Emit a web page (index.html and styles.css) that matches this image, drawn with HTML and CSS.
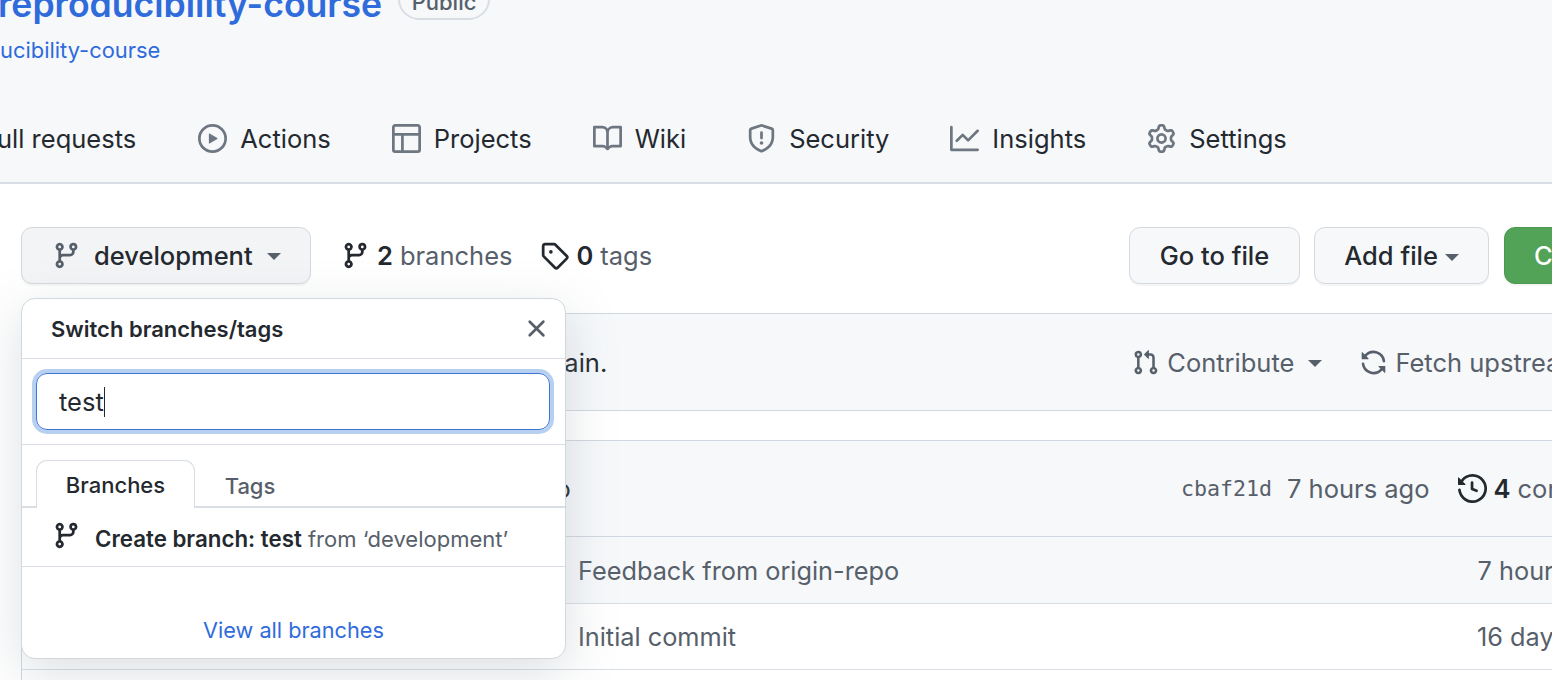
FILE: index.html

```html
<!DOCTYPE html>
<html lang="en">
<head>
  <meta charset="UTF-8">
  <title>reproducibility-course</title>
  <link rel="stylesheet" href="styles.css">
</head>
<body>
  <svg class="sprite" width="0" height="0">
    <symbol id="i-play" viewBox="0 0 16 16"><path d="M8 0a8 8 0 1 1 0 16A8 8 0 0 1 8 0ZM1.5 8a6.5 6.5 0 1 0 13 0 6.5 6.5 0 0 0-13 0Zm4.879-2.773 4.264 2.559a.25.25 0 0 1 0 .428l-4.264 2.559A.25.25 0 0 1 6 10.559V5.442a.25.25 0 0 1 .379-.215Z"/></symbol>
    <symbol id="i-table" viewBox="0 0 16 16"><path d="M0 1.75C0 .784.784 0 1.75 0h12.5C15.216 0 16 .784 16 1.75v12.5A1.75 1.75 0 0 1 14.25 16H1.75A1.75 1.75 0 0 1 0 14.25ZM6.5 6.5v8h7.75a.25.25 0 0 0 .25-.25V6.5Zm8-1.5V1.75a.25.25 0 0 0-.25-.25H1.75a.25.25 0 0 0-.25.25V5Zm-13 1.5v7.75c0 .138.112.25.25.25H5v-8Z"/></symbol>
    <symbol id="i-book" viewBox="0 0 16 16"><path d="M0 1.75A.75.75 0 0 1 .75 1h4.253c1.227 0 2.317.59 3 1.501A3.743 3.743 0 0 1 11.006 1h4.245a.75.75 0 0 1 .75.75v10.5a.75.75 0 0 1-.75.75h-4.507a2.25 2.25 0 0 0-1.591.659l-.622.621a.75.75 0 0 1-1.06 0l-.622-.621A2.25 2.25 0 0 0 5.258 13H.75a.75.75 0 0 1-.75-.75Zm7.251 10.324.004-5.073-.002-2.253A2.25 2.25 0 0 0 5.003 2.5H1.5v9h3.757a3.75 3.75 0 0 1 1.994.574ZM8.755 4.75l-.004 7.322a3.752 3.752 0 0 1 1.992-.572H14.5v-9h-3.495a2.25 2.25 0 0 0-2.25 2.25Z"/></symbol>
    <symbol id="i-shield" viewBox="0 0 16 16"><path d="M7.467.133a1.748 1.748 0 0 1 1.066 0l5.25 1.68A1.75 1.75 0 0 1 15 3.48V7c0 1.566-.32 3.182-1.303 4.682-.983 1.498-2.585 2.813-5.032 3.855a1.697 1.697 0 0 1-1.33 0c-2.447-1.042-4.049-2.357-5.032-3.855C1.32 10.182 1 8.566 1 7V3.48a1.75 1.75 0 0 1 1.217-1.667Zm.61 1.429a.25.25 0 0 0-.153 0l-5.25 1.68a.25.25 0 0 0-.174.238V7c0 1.358.275 2.666 1.057 3.86.784 1.194 2.121 2.34 4.366 3.297a.196.196 0 0 0 .154 0c2.245-.956 3.582-2.104 4.366-3.298C13.225 9.666 13.5 8.36 13.5 7V3.48a.251.251 0 0 0-.174-.237l-5.25-1.68ZM8.75 4.75v3a.75.75 0 0 1-1.5 0v-3a.75.75 0 0 1 1.5 0ZM9 10.5a1 1 0 1 1-2 0 1 1 0 0 1 2 0Z"/></symbol>
    <symbol id="i-graph" viewBox="0 0 16 16"><path d="M1.5 1.75V13.5h13.75a.75.75 0 0 1 0 1.5H.75a.75.75 0 0 1-.75-.75V1.75a.75.75 0 0 1 1.5 0Zm14.28 2.53-5.25 5.25a.75.75 0 0 1-1.06 0L7 7.06 4.28 9.78a.751.751 0 0 1-1.042-.018.751.751 0 0 1-.018-1.042l3.25-3.25a.75.75 0 0 1 1.06 0L10 7.94l4.72-4.72a.751.751 0 0 1 1.042.018.751.751 0 0 1 .018 1.042Z"/></symbol>
    <symbol id="i-gear" viewBox="0 0 16 16"><path d="M8 0a8.2 8.2 0 0 1 .701.031C9.444.095 9.99.645 10.16 1.29l.288 1.107c.018.066.079.158.212.224.231.114.454.243.668.386.123.082.233.09.299.071l1.103-.303c.644-.176 1.392.021 1.82.63.27.385.506.792.704 1.218.315.675.111 1.422-.364 1.891l-.814.806c-.049.048-.098.147-.088.294.016.257.016.515 0 .772-.01.147.038.246.088.294l.814.806c.475.469.679 1.216.364 1.891a7.977 7.977 0 0 1-.704 1.217c-.428.61-1.176.807-1.82.63l-1.102-.302c-.067-.019-.177-.011-.3.071a5.909 5.909 0 0 1-.668.386c-.133.066-.194.158-.211.224l-.29 1.106c-.168.646-.715 1.196-1.458 1.26a8.006 8.006 0 0 1-1.402 0c-.743-.064-1.289-.614-1.458-1.26l-.289-1.106c-.018-.066-.079-.158-.212-.224a5.738 5.738 0 0 1-.668-.386c-.123-.082-.233-.09-.299-.071l-1.103.303c-.644.176-1.392-.021-1.82-.63a8.12 8.12 0 0 1-.704-1.218c-.315-.675-.111-1.422.363-1.891l.815-.806c.05-.048.098-.147.088-.294a6.214 6.214 0 0 1 0-.772c.01-.147-.038-.246-.088-.294l-.815-.806C.635 6.045.431 5.298.746 4.623a7.92 7.92 0 0 1 .704-1.217c.428-.61 1.176-.807 1.82-.63l1.102.302c.067.019.177.011.3-.071.214-.143.437-.272.668-.386.133-.066.194-.158.211-.224l.29-1.106C6.009.645 6.556.095 7.299.03 7.53.01 7.764 0 8 0Zm-.571 1.525c-.036.003-.108.036-.137.146l-.289 1.105c-.147.561-.549.967-.998 1.189-.173.086-.34.183-.5.29-.417.278-.97.423-1.529.27l-1.103-.303c-.109-.03-.175.016-.195.045-.22.312-.412.644-.573.99-.014.031-.021.11.059.19l.815.806c.411.406.562.957.53 1.456a4.709 4.709 0 0 0 0 .582c.032.499-.119 1.05-.53 1.456l-.815.806c-.081.08-.073.159-.059.19.162.346.353.677.573.989.02.03.085.076.195.046l1.102-.303c.56-.153 1.113-.008 1.53.27.161.107.328.204.501.29.447.222.85.629.997 1.189l.289 1.105c.029.109.101.143.137.146a6.6 6.6 0 0 0 1.142 0c.036-.003.108-.036.137-.146l.289-1.105c.147-.561.549-.967.998-1.189.173-.086.34-.183.5-.29.417-.278.97-.423 1.529-.27l1.103.303c.109.029.175-.016.195-.045.22-.313.411-.644.573-.99.014-.031.021-.11-.059-.19l-.815-.806c-.411-.406-.562-.957-.53-1.456a4.709 4.709 0 0 0 0-.582c-.032-.499.119-1.05.53-1.456l.815-.806c.081-.08.073-.159.059-.19a6.464 6.464 0 0 0-.573-.989c-.02-.03-.085-.076-.195-.046l-1.102.303c-.56.153-1.113.008-1.53-.27a4.44 4.44 0 0 0-.501-.29c-.447-.222-.85-.629-.997-1.189l-.289-1.105c-.029-.11-.101-.143-.137-.146a6.6 6.6 0 0 0-1.142 0ZM11 8a3 3 0 1 1-6 0 3 3 0 0 1 6 0ZM9.5 8a1.5 1.5 0 1 0-3.001.001A1.5 1.5 0 0 0 9.5 8Z"/></symbol>
    <symbol id="i-branch" viewBox="0 0 16 16"><path d="M9.5 3.25a2.25 2.25 0 1 1 3 2.122V6A2.5 2.5 0 0 1 10 8.5H6a1 1 0 0 0-1 1v1.128a2.251 2.251 0 1 1-1.5 0V5.372a2.25 2.25 0 1 1 1.5 0v1.836A2.493 2.493 0 0 1 6 7h4a1 1 0 0 0 1-1v-.628A2.25 2.25 0 0 1 9.5 3.25Zm-6 0a.75.75 0 1 0 1.5 0 .75.75 0 0 0-1.5 0Zm8.25-.75a.75.75 0 1 0 0 1.5.75.75 0 0 0 0-1.5ZM4.25 12a.75.75 0 1 0 0 1.5.75.75 0 0 0 0-1.5Z"/></symbol>
    <symbol id="i-tag" viewBox="0 0 16 16"><path d="M1 7.775V2.75C1 1.784 1.784 1 2.75 1h5.025c.464 0 .91.184 1.238.513l6.25 6.25a1.75 1.75 0 0 1 0 2.474l-5.026 5.026a1.75 1.75 0 0 1-2.474 0l-6.25-6.25A1.752 1.752 0 0 1 1 7.775Zm1.5 0c0 .066.026.13.073.177l6.25 6.25a.25.25 0 0 0 .354 0l5.025-5.025a.25.25 0 0 0 0-.354l-6.25-6.25a.25.25 0 0 0-.177-.073H2.75a.25.25 0 0 0-.25.25ZM6 5a1 1 0 1 1 0 2 1 1 0 0 1 0-2Z"/></symbol>
    <symbol id="i-x" viewBox="0 0 16 16"><path d="M3.72 3.72a.75.75 0 0 1 1.06 0L8 6.94l3.22-3.22a.749.749 0 0 1 1.275.326.749.749 0 0 1-.215.734L9.06 8l3.22 3.22a.749.749 0 0 1-.326 1.275.749.749 0 0 1-.734-.215L8 9.06l-3.22 3.22a.751.751 0 0 1-1.042-.018.751.751 0 0 1-.018-1.042L6.94 8 3.72 4.78a.75.75 0 0 1 0-1.06Z"/></symbol>
    <symbol id="i-pr" viewBox="0 0 16 16"><path d="M1.5 3.25a2.25 2.25 0 1 1 3 2.122v5.256a2.251 2.251 0 1 1-1.5 0V5.372A2.25 2.25 0 0 1 1.5 3.25Zm5.677-.177L9.573.677A.25.25 0 0 1 10 .854V2.5h1A2.5 2.5 0 0 1 13.5 5v5.628a2.251 2.251 0 1 1-1.5 0V5a1 1 0 0 0-1-1h-1v1.646a.25.25 0 0 1-.427.177L7.177 3.427a.25.25 0 0 1 0-.354ZM3.75 2.5a.75.75 0 1 0 0 1.5.75.75 0 0 0 0-1.5Zm0 9.5a.75.75 0 1 0 0 1.5.75.75 0 0 0 0-1.5Zm8.25.75a.75.75 0 1 0 1.5 0 .75.75 0 0 0-1.5 0Z"/></symbol>
    <symbol id="i-sync" viewBox="0 0 16 16"><path d="M1.705 8.005a.75.75 0 0 1 .834.656 5.5 5.5 0 0 0 9.592 2.97l-1.204-1.204a.25.25 0 0 1 .177-.427h3.646a.25.25 0 0 1 .25.25v3.646a.25.25 0 0 1-.427.177l-1.38-1.38A7.002 7.002 0 0 1 1.05 8.84a.75.75 0 0 1 .656-.834ZM8 2.5a5.487 5.487 0 0 0-4.131 1.869l1.204 1.204A.25.25 0 0 1 4.896 6H1.25A.25.25 0 0 1 1 5.75V2.104a.25.25 0 0 1 .427-.177l1.38 1.38A7.002 7.002 0 0 1 14.95 7.16a.75.75 0 0 1-1.49.178A5.5 5.5 0 0 0 8 2.5Z"/></symbol>
    <symbol id="i-history" viewBox="0 0 16 16"><path d="m.427 1.927 1.215 1.215a8.002 8.002 0 1 1-1.6 5.685.75.75 0 1 1 1.493-.154 6.5 6.5 0 1 0 1.18-4.458l1.358 1.358A.25.25 0 0 1 3.896 6H.25A.25.25 0 0 1 0 5.75V2.104a.25.25 0 0 1 .427-.177ZM7.75 4a.75.75 0 0 1 .75.75v2.992l2.028.812a.75.75 0 0 1-.557 1.392l-2.5-1A.751.751 0 0 1 7 8.25v-3.5A.75.75 0 0 1 7.75 4Z"/></symbol>
  </svg>

  <header class="repo-head">
    <div class="title-row">
      <a class="repo-name">reproducibility-course</a>
      <span class="badge">Public</span>
    </div>
    <a class="fork-link">ucibility-course</a>
    <nav class="tabs">
      <a class="tab tab-cut">ull requests</a>
      <a class="tab"><svg class="icon nav-icon"><use href="#i-play"/></svg>Actions</a>
      <a class="tab"><svg class="icon nav-icon"><use href="#i-table"/></svg>Projects</a>
      <a class="tab"><svg class="icon nav-icon"><use href="#i-book"/></svg>Wiki</a>
      <a class="tab"><svg class="icon nav-icon"><use href="#i-shield"/></svg>Security</a>
      <a class="tab"><svg class="icon nav-icon"><use href="#i-graph"/></svg>Insights</a>
      <a class="tab"><svg class="icon nav-icon"><use href="#i-gear"/></svg>Settings</a>
    </nav>
  </header>

  <main class="content">
    <div class="toolbar">
      <button class="btn btn-branch">
        <svg class="icon branch-icon"><use href="#i-branch"/></svg>
        <span>development</span>
        <i class="caret"></i>
      </button>
      <a class="count count-branches"><svg class="icon dark-icon"><use href="#i-branch"/></svg><b>2</b> <span>branches</span></a>
      <a class="count count-tags"><svg class="icon dark-icon"><use href="#i-tag"/></svg><b>0</b> <span>tags</span></a>
      <div class="toolbar-right">
        <button class="btn btn-go">Go to file</button>
        <button class="btn btn-add">Add file <i class="caret"></i></button>
        <button class="btn btn-code">Code</button>
      </div>
    </div>

    <div class="notice">
      <span class="notice-text">main.</span>
      <div class="notice-actions">
        <a class="notice-action action-contribute"><svg class="icon muted-icon"><use href="#i-pr"/></svg>Contribute <i class="caret"></i></a>
        <a class="notice-action"><svg class="icon muted-icon"><use href="#i-sync"/></svg>Fetch upstream</a>
      </div>
    </div>

    <div class="files">
      <div class="commit-bar">
        <span class="commit-msg">Feedback from origin-repo</span>
        <span class="sha">cbaf21d</span>
        <span class="commit-time">7 hours ago</span>
        <a class="commits"><svg class="icon dark-icon"><use href="#i-history"/></svg><b>4</b> <span>commits</span></a>
      </div>
      <div class="file-row file-row-hover"><span class="file-msg">Feedback from origin-repo</span><span class="file-time">7 hours ago</span></div>
      <div class="file-row"><span class="file-msg">Initial commit</span><span class="file-time">16 days ago</span></div>
      <div class="file-row"></div>
    </div>
  </main>

  <div class="popup">
    <div class="popup-head">
      <strong>Switch branches/tags</strong>
      <svg class="icon close-icon"><use href="#i-x"/></svg>
    </div>
    <div class="popup-filter">
      <div class="filter-input">test<span class="cursor"></span></div>
    </div>
    <div class="popup-tabs">
      <span class="popup-tab popup-tab-on">Branches</span>
      <span class="popup-tab">Tags</span>
    </div>
    <div class="create-row">
      <svg class="icon create-icon"><use href="#i-branch"/></svg>
      <span><b>Create branch: test</b> <span class="from">from ‘development’</span></span>
    </div>
    <div class="popup-foot"><a>View all branches</a></div>
  </div>
</body>
</html>
```

FILE: styles.css

```css
html, body {
  height: 100%;
  overflow: hidden;
}

body {
  margin: 0;
  position: relative;
  font-family: Inter, "Noto Sans", sans-serif;
  font-size: 25.5px;
  color: #24292f;
  background: #fff;
}

.sprite {
  position: absolute;
}

.icon {
  fill: currentColor;
  flex: none;
}

.caret {
  display: inline-block;
  width: 0;
  height: 0;
  border-style: solid;
  border-width: 7px 7px 0;
  border-color: currentColor transparent transparent;
}

/* repo header */
.repo-head {
  height: 182px;
  background: #f6f8fa;
  border-bottom: 2px solid #d8dee4;
  overflow: hidden;
}

.title-row {
  display: flex;
  align-items: flex-end;
  height: 27px;
  margin-left: -2px;
}

.repo-name {
  font-size: 35.6px;
  line-height: 44px;
  font-weight: 600;
  color: #2f6bdb;
  flex: none;
}

.badge {
  margin-left: 16px;
  width: 92px;
  height: 42px;
  box-sizing: border-box;
  border: 2px solid #d8dee4;
  border-radius: 22px;
  font-size: 22px;
  font-weight: 500;
  line-height: 44px;
  text-align: center;
  color: #57606a;
  flex: none;
  margin-bottom: 7px;
}

.fork-link {
  display: block;
  margin-top: 10px;
  font-size: 21.9px;
  line-height: 26px;
  color: #2f6bdb;
}

.tabs {
  display: flex;
  gap: 61px;
  margin-top: 60px;
  height: 30px;
  align-items: center;
}

.tab {
  display: flex;
  align-items: center;
  gap: 13px;
  white-space: nowrap;
}

.tab-cut {
  margin-left: -3px;
  margin-right: 1px;
}

.nav-icon {
  width: 29px;
  height: 29px;
  color: #6e7781;
}

/* main */
.content {
  width: 1643px;
  margin-left: 21px;
  padding-top: 43px;
}

.toolbar {
  display: flex;
  align-items: center;
  height: 57px;
}

.btn {
  height: 57px;
  box-sizing: border-box;
  border: 1.5px solid #d5d9de;
  border-radius: 11px;
  background: #f6f8fa;
  font-family: inherit;
  font-size: 25.5px;
  font-weight: 500;
  color: #24292f;
  padding: 0;
  box-shadow: 0 2px 0 rgba(27, 31, 36, 0.04);
}

.btn-branch {
  display: flex;
  align-items: center;
  width: 290px;
  padding-left: 30px;
  background: #f3f4f6;
}

.branch-icon {
  width: 29px;
  height: 29px;
  color: #57606a;
  margin-right: 13px;
}

.btn-branch .caret {
  margin-left: 14px;
  margin-top: 2px;
  color: #57606a;
}

.count {
  display: flex;
  align-items: center;
  white-space: nowrap;
}

.count b, .commits b {
  font-weight: 600;
}

.count span, .commits span {
  color: #57606a;
  margin-left: 7px;
}

.count-branches {
  margin-left: 30px;
}

.count-tags {
  margin-left: 28px;
}

.dark-icon {
  width: 29px;
  height: 29px;
  margin-right: 7px;
}

.toolbar-right {
  display: flex;
  gap: 14px;
  margin-left: auto;
}

.btn-go {
  width: 171px;
}

.btn-add {
  width: 175px;
  margin-right: 1px;
}

.btn-add .caret {
  vertical-align: 4px;
  color: #57606a;
}

.btn-code {
  width: 160px;
  padding-left: 29px;
  text-align: left;
  background: #52a257;
  border-color: #4b9850;
  color: #fff;
}

.notice {
  display: flex;
  align-items: center;
  height: 98px;
  margin-top: 29px;
  box-sizing: border-box;
  border: 1.5px solid #d0d7de;
  border-radius: 11px;
  background: #f6f8fa;
  padding-left: 520px;
}

.notice-actions {
  display: flex;
  margin-left: 525px;
  gap: 38px;
  white-space: nowrap;
}

.notice-action {
  display: flex;
  align-items: center;
  color: #57606a;
}

.muted-icon {
  width: 27px;
  height: 27px;
  margin-right: 8px;
}

.action-contribute .caret {
  margin-left: 14px;
  margin-top: 2px;
}

.files {
  margin-top: 29px;
  border: 1.5px solid #d0d7de;
  border-radius: 11px 11px 0 0;
}

.commit-bar {
  display: flex;
  align-items: center;
  height: 95px;
  background: #f6f8fa;
  border-bottom: 1.5px solid #d0d7de;
  padding-left: 225px;
  white-space: nowrap;
}

.commit-msg {
  width: 934px;
  flex: none;
}

.sha {
  font-family: "DejaVu Sans Mono", monospace;
  font-size: 21.6px;
  color: #57606a;
}

.commit-time {
  margin-left: 15px;
  color: #57606a;
}

.commits {
  display: flex;
  align-items: center;
  margin-left: 28px;
}

.file-row {
  display: flex;
  align-items: center;
  height: 64.5px;
  padding: 1px 44px 0 556px;
  border-bottom: 1.5px solid #d8dee4;
  font-size: 25.3px;
  color: #57606a;
  white-space: nowrap;
}

.file-row-hover {
  background: #f6f8fa;
}

.file-time {
  margin-left: auto;
}

/* branch popup */
.popup {
  position: absolute;
  left: 21px;
  top: 298px;
  width: 545px;
  height: 361px;
  box-sizing: border-box;
  background: #fff;
  border: 1.5px solid #d0d7de;
  border-radius: 14px;
  box-shadow: 0 14px 50px rgba(140, 149, 159, 0.3);
  display: flex;
  flex-direction: column;
  font-size: 22px;
}

.popup-head {
  display: flex;
  align-items: center;
  justify-content: space-between;
  height: 60px;
  flex: none;
  box-sizing: border-box;
  padding: 0 14px 0 29px;
  border-bottom: 1.5px solid #d8dee4;
}

.popup-head strong {
  font-weight: 600;
}

.close-icon {
  width: 29px;
  height: 29px;
  color: #57606a;
}

.popup-filter {
  height: 86px;
  flex: none;
  box-sizing: border-box;
  padding: 14px 15px 14px 14px;
  border-bottom: 1.5px solid #d8dee4;
}

.filter-input {
  display: flex;
  align-items: center;
  height: 57px;
  box-sizing: border-box;
  padding-left: 22px;
  border: 1.5px solid #3d74d8;
  border-radius: 11px;
  box-shadow: 0 0 0 4px #b8d0f0;
  font-size: 25.5px;
}

.cursor {
  width: 1px;
  height: 30px;
  background: #24292f;
}

.popup-tabs {
  display: flex;
  flex: none;
  height: 63px;
  box-sizing: border-box;
  padding: 15px 0 0 14px;
  border-bottom: 2px solid #d8dee4;
}

.popup-tab {
  width: 110px;
  text-align: center;
  line-height: 52px;
  color: #57606a;
  font-weight: 500;
}

.popup-tab-on {
  width: 159px;
  box-sizing: border-box;
  height: 48px;
  background: #fff;
  border: 1.5px solid #d8dee4;
  border-bottom: 0;
  border-radius: 11px 11px 0 0;
  color: #24292f;
  line-height: 49px;
}

.create-row {
  display: flex;
  align-items: center;
  height: 59px;
  flex: none;
  box-sizing: border-box;
  padding: 2px 0 0 30px;
  border-bottom: 1.5px solid #d8dee4;
  white-space: nowrap;
}

.create-row b {
  font-size: 22.3px;
  font-weight: 600;
}

.create-icon {
  width: 29px;
  height: 29px;
  margin-right: 14px;
  margin-top: -6px;
}

.from {
  color: #57606a;
}

.popup-foot {
  flex: 1;
  display: flex;
  align-items: flex-end;
  justify-content: center;
  padding-bottom: 15px;
  font-size: 21.7px;
  color: #2f6bdb;
}
```
